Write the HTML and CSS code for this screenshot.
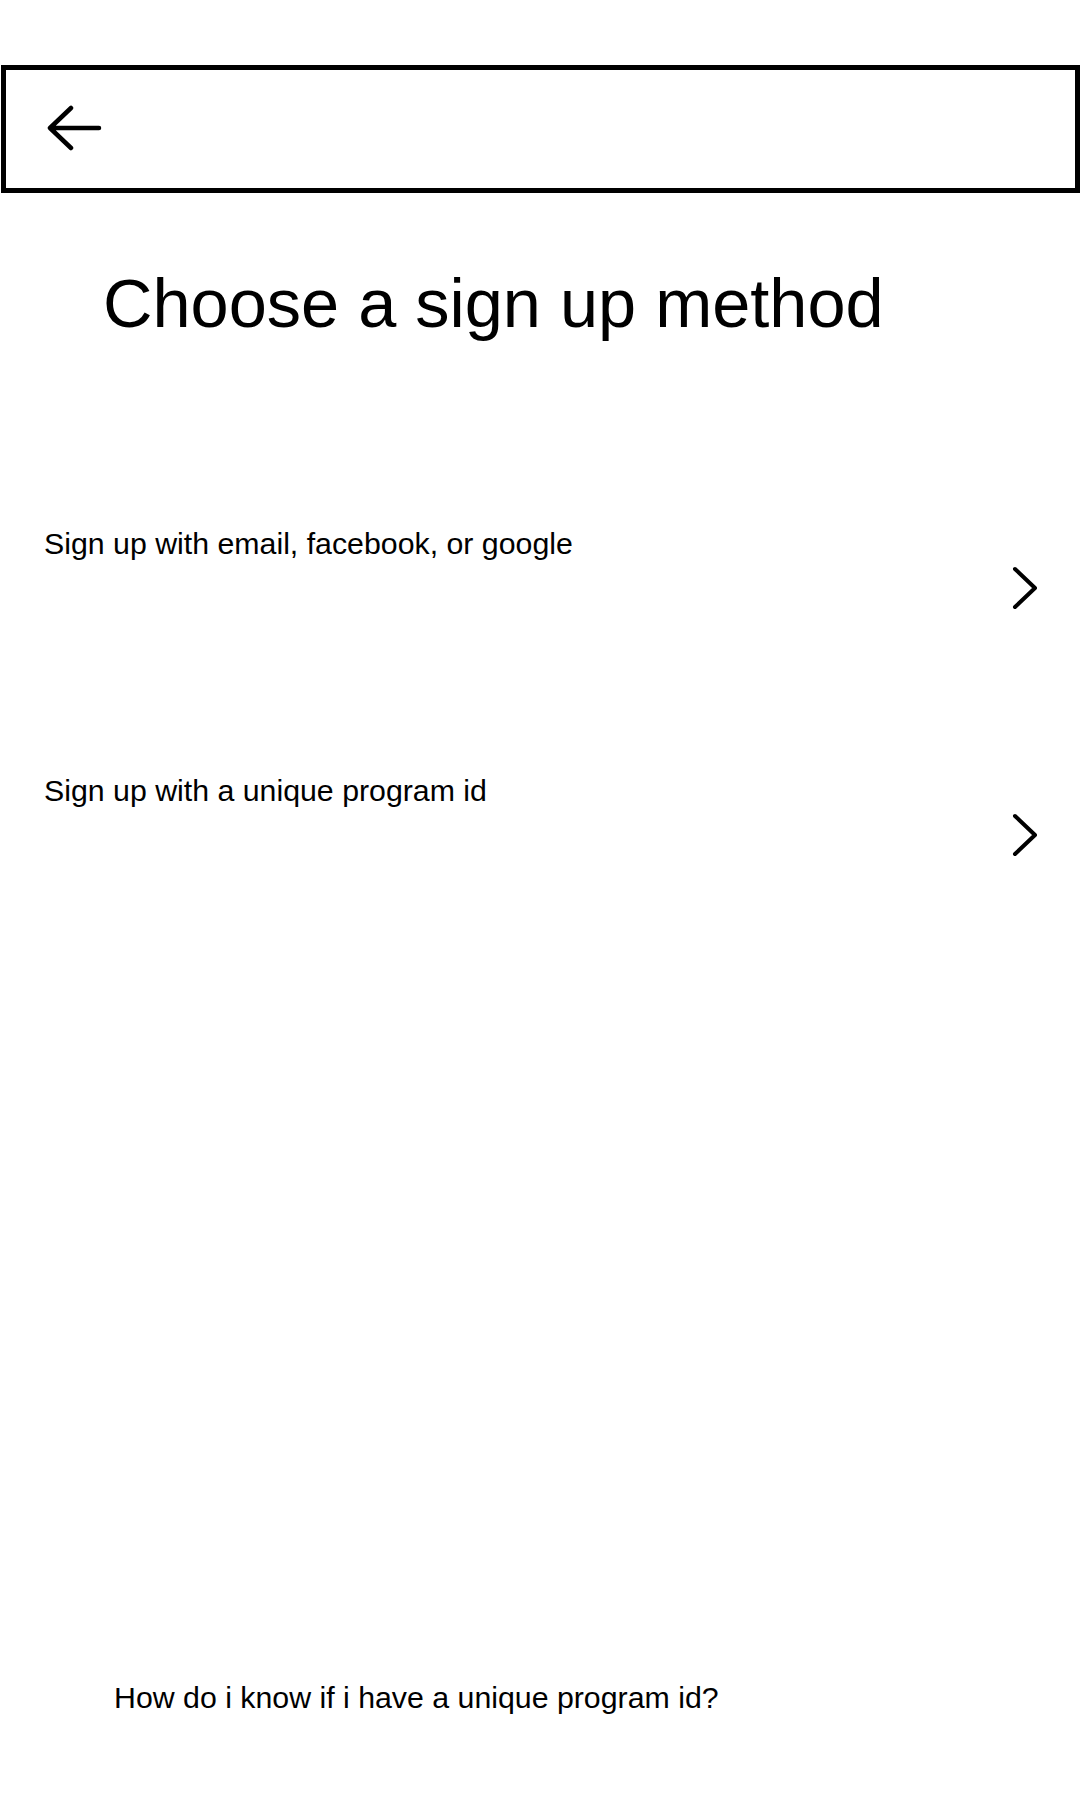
FILE: index.html
```html
<!DOCTYPE html>
<html>
<head>
<meta charset="utf-8">
<link rel="stylesheet" href="styles.css">
</head>
<body>
<div class="page">
  <header class="topbar">
    <svg class="back" width="56" height="50" viewBox="0 0 56 50">
      <path d="M4 23 H53 M25 3 L4 23 L25 43" fill="none" stroke="#000" stroke-width="4.5" stroke-linecap="round" stroke-linejoin="round"/>
    </svg>
  </header>
  <h1 class="title">Choose a sign up method</h1>
  <div class="methods">
    <div class="method">
      <span class="method-label">Sign up with email, facebook, or google</span>
      <svg class="chevron" width="28" height="46" viewBox="0 0 28 46">
        <path d="M4 4 L24 23 L4 42" fill="none" stroke="#000" stroke-width="4" stroke-linecap="round" stroke-linejoin="round"/>
      </svg>
    </div>
    <div class="method">
      <span class="method-label">Sign up with a unique program id</span>
      <svg class="chevron" width="28" height="46" viewBox="0 0 28 46">
        <path d="M4 4 L24 23 L4 42" fill="none" stroke="#000" stroke-width="4" stroke-linecap="round" stroke-linejoin="round"/>
      </svg>
    </div>
  </div>
  <p class="help">How do i know if i have a unique program id?</p>
</div>
</body>
</html>
```

FILE: styles.css
```css
html, body {
  margin: 0;
  padding: 0;
  background: #fff;
}

body {
  font-family: "Liberation Sans", Arial, sans-serif;
  color: #000;
}

.page {
  min-height: 1800px;
  display: flex;
  flex-direction: column;
  box-sizing: border-box;
  padding-bottom: 84px;
}

.topbar {
  margin: 65px 0 0 1px;
  height: 128px;
  box-sizing: border-box;
  border: 5px solid #000;
  display: flex;
  align-items: flex-start;
  padding: 35px 0 0 40px;
}

.back {
  display: block;
}

.title {
  margin: 72px 0 0 103px;
  font-size: 68.5px;
  font-weight: normal;
  line-height: 78px;
}

.methods {
  margin-top: 183px;
  display: flex;
  flex-direction: column;
}

.method {
  height: 247px;
  display: flex;
  justify-content: space-between;
  align-items: flex-start;
  padding: 0 41px 0 44px;
}

.method-label {
  font-size: 30.3px;
  line-height: 36px;
}

.chevron {
  display: block;
  margin-top: 39px;
}

.help {
  margin: auto 0 0 114px;
  font-size: 30.3px;
  line-height: 36px;
}
```
